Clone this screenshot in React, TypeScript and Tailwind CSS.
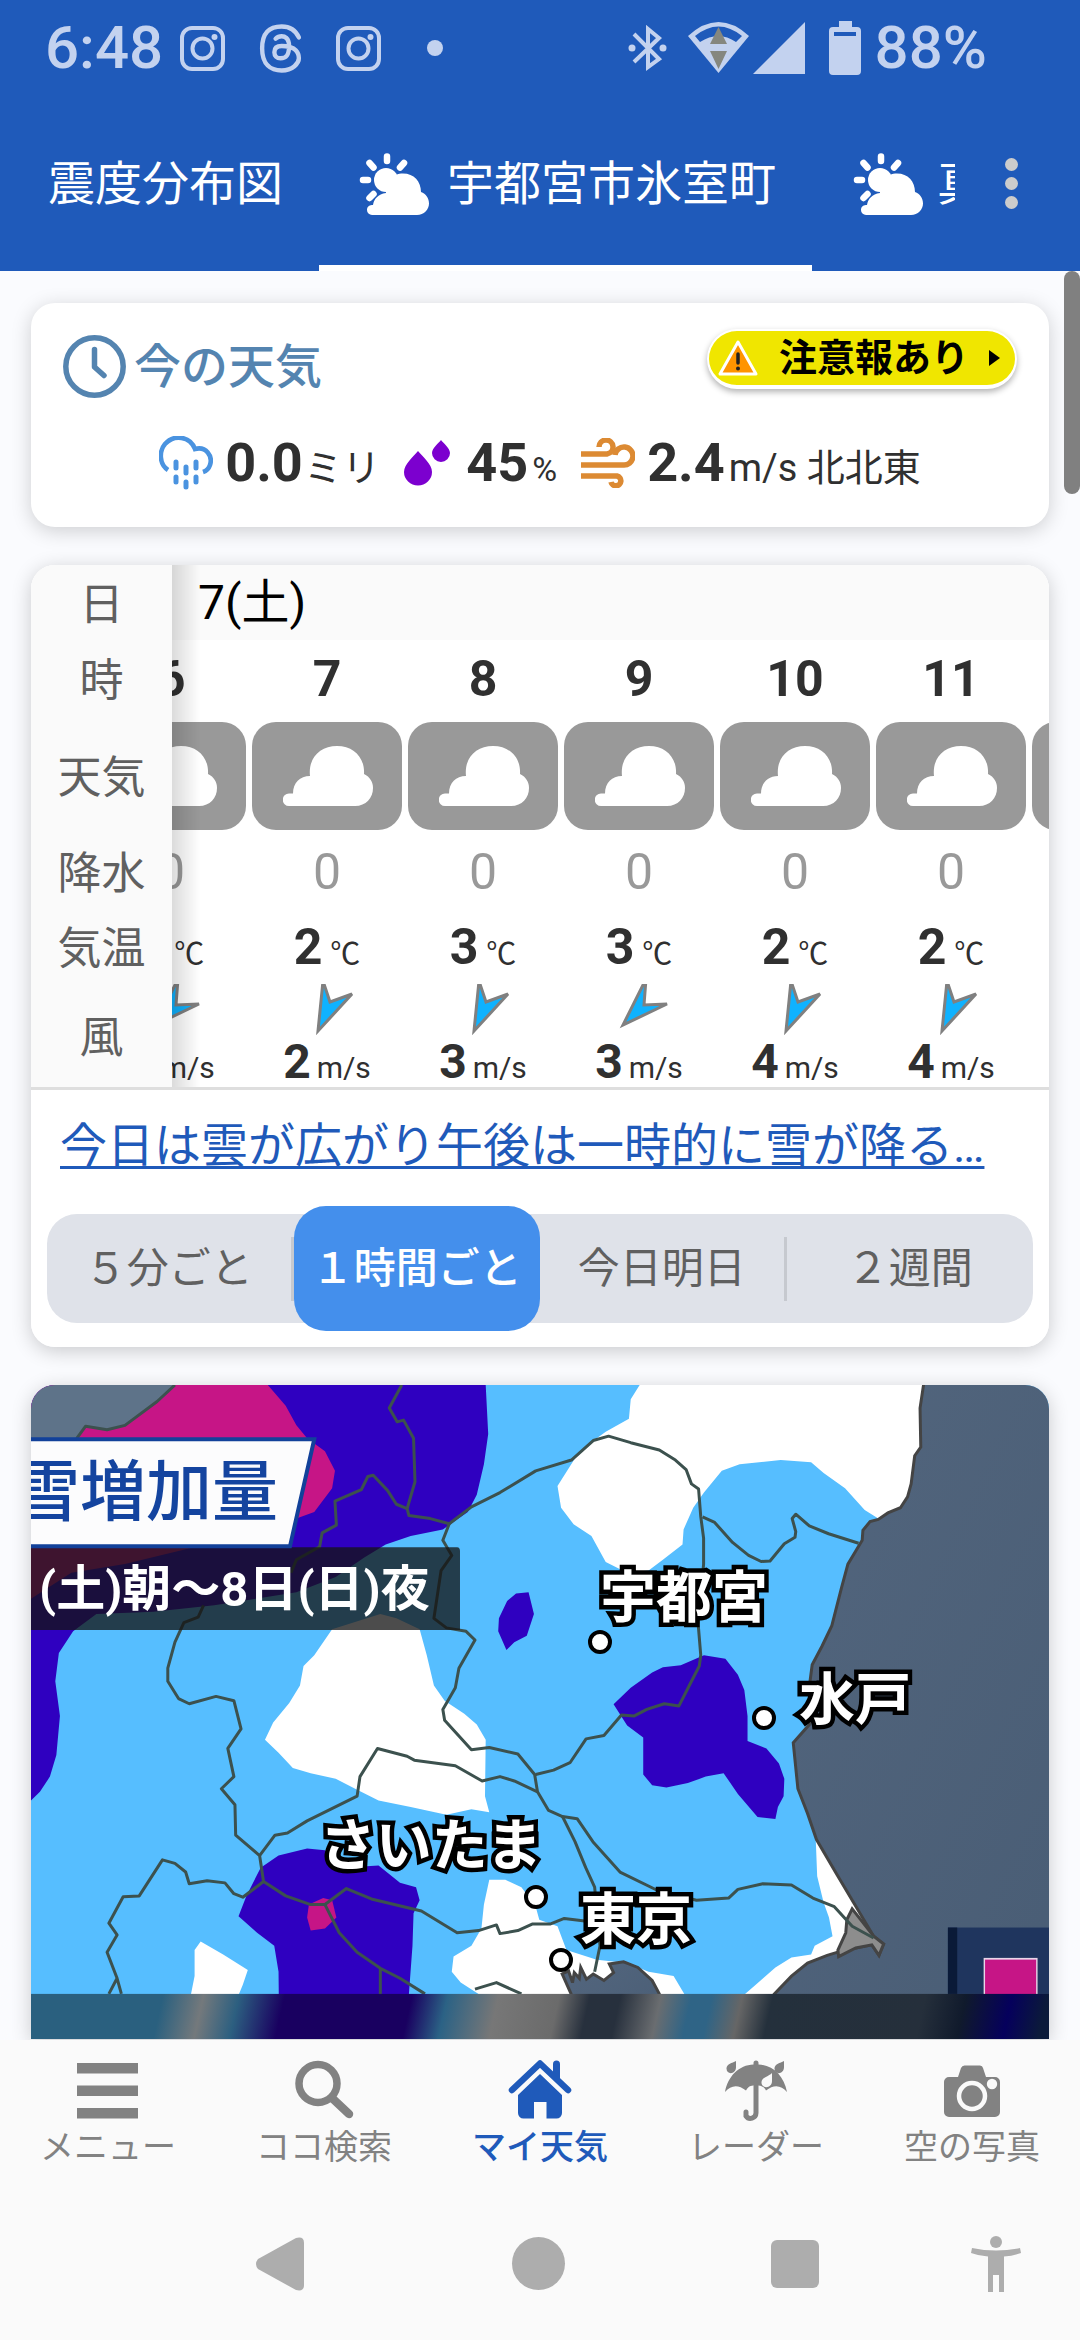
import { useState } from "react";
import clsx from "clsx";

type WindDir = "nne" | "ne";

type Hour = {
  hour: number;
  rain: number;
  temp: number;
  wind: number;
  dir: WindDir;
};

const hours: readonly Hour[] = [
  { hour: 6, rain: 0, temp: 2, wind: 2, dir: "ne" },
  { hour: 7, rain: 0, temp: 2, wind: 2, dir: "nne" },
  { hour: 8, rain: 0, temp: 3, wind: 3, dir: "nne" },
  { hour: 9, rain: 0, temp: 3, wind: 3, dir: "ne" },
  { hour: 10, rain: 0, temp: 2, wind: 4, dir: "nne" },
  { hour: 11, rain: 0, temp: 2, wind: 4, dir: "nne" },
  { hour: 12, rain: 0, temp: 2, wind: 4, dir: "nne" },
];

const ranges = ["５分ごと", "１時間ごと", "今日明日", "２週間"] as const;

const arrowPaths: Record<WindDir, string> = {
  nne: "M-4 -3 L3 18 L25 10 L-9 47Z",
  ne: "M7 -5 L5 21 L28 20 L-16 41Z",
};

/* ---------- status bar icons ---------- */

function InstagramIcon() {
  return (
    <svg viewBox="0 0 45 45" className="size-[45px]" fill="none" stroke="currentColor" strokeWidth="4">
      <rect x="2" y="2" width="41" height="41" rx="10" />
      <circle cx="22.5" cy="22.5" r="10" />
      <circle cx="34.5" cy="11" r="3" fill="currentColor" stroke="none" />
    </svg>
  );
}

function ThreadsIcon() {
  return (
    <svg viewBox="3 2 17 20" className="h-[49px] w-[43px]" fill="none" stroke="currentColor" strokeWidth="1.8" strokeLinecap="round">
      <path d="M19 7.5c-1.333 -3 -3.667 -4.5 -7 -4.5c-5 0 -8 2.5 -8 9s3.5 9 8 9s7 -3 7 -5s-1 -5 -7 -5c-2.5 0 -3 1.25 -3 2.5c0 1.5 1 2.5 2.5 2.5c2.5 0 3.5 -1.5 3.5 -5s-2 -4 -3 -4s-1.833 .333 -2.5 1" />
    </svg>
  );
}

function BluetoothIcon() {
  return (
    <svg viewBox="0 0 40 46" className="h-[46px] w-10" fill="none" stroke="currentColor" strokeWidth="4">
      <path d="M6 9 L31 34 L20 42 V4 L31 13 L6 37" />
      <circle cx="4" cy="23" r="3.5" fill="currentColor" stroke="none" />
      <circle cx="35" cy="23" r="3.5" fill="currentColor" stroke="none" />
    </svg>
  );
}

function WifiIcon() {
  return (
    <svg viewBox="0 0 61 52" className="h-[52px] w-[61px]">
      <path d="M0 14 Q30.500 -14 61 14 L30.500 51Z" fill="currentColor" />
      <path d="M7 14 Q30.500 -5 54 14 L48 20 Q30.500 8 12 20Z" fill="#1f5aba" />
      <path d="M22 22 L30.500 5 L39 22Z M22 29 H39 L30.500 47Z" fill="#85877f" />
    </svg>
  );
}

function BatteryIcon() {
  return (
    <svg viewBox="0 0 32 54" className="h-[54px] w-8">
      <path d="M10 0 H23 V6 H28 a4 4 0 0 1 4 4 V50 a4 4 0 0 1 -4 4 H4 a4 4 0 0 1 -4 -4 V10 a4 4 0 0 1 4 -4 H10Z" fill="currentColor" />
      <rect x="5" y="11" width="22" height="4" fill="#1f5aba" />
    </svg>
  );
}

/* ---------- weather icons ---------- */

function SunCloudIcon() {
  return (
    <svg viewBox="0 0 72 64" className="h-16 w-[72px] shrink-0" fill="white">
      <g stroke="white" strokeWidth="6.500" strokeLinecap="round">
        <path d="M28 4.500 V9 M10.500 11 L14.500 15.500 M45 11 L41 15.500 M4 28 H9 M10.500 46 L14.500 42" />
      </g>
      <circle cx="27" cy="28" r="12" />
      <path d="M13 63 a5 5 0 0 1 -5 -5 c0 -4 3 -5 6 -5 c1 -6 5 -11 13 -12 c-1 -12 7 -19.500 17 -19.500 c11 0 18 8 18 18.500 c5 2 8 6 8 11.500 c0 6 -5 11.500 -12 11.500Z" />
    </svg>
  );
}

function CloudIcon() {
  return (
    <svg viewBox="0 0 90 60" className="ml-0.5 h-[60px] w-[90px]" fill="white">
      <path d="M6 60 a6 6 0 0 1 0 -12.500 H10 C10 37 17 30 27 30 C25 12 37 0 54 0 C71 0 82 12 81 28 C87 31 90 36 90 42 C90 52 83 60 72 60Z" />
    </svg>
  );
}

function ClockIcon() {
  return (
    <svg viewBox="0 0 63 63" className="size-[63px]" fill="none" stroke="#5484b0" strokeWidth="5.500" strokeLinecap="round" strokeLinejoin="round">
      <circle cx="31.500" cy="31.500" r="28.700" />
      <path d="M31.500 14.500 V32 L41 40.500" />
    </svg>
  );
}

function RainIcon() {
  return (
    <svg viewBox="0 0 54 54" className="size-[54px]" fill="none" stroke="#4a93e0" strokeWidth="4.600">
      <path d="M9 34 C0 28 0 15 6 8 C15 -2 31 0 36 13 C47 10 54 20 51 29 C50 32 47 35 44 36" />
      <path d="M17 26 V32 M27 31 V37 M37 26 V32 M17 41 V46 M27 46 V51 M37 41 V46" strokeLinecap="round" strokeWidth="5" />
    </svg>
  );
}

function DropsIcon() {
  return (
    <svg viewBox="0 0 46 46" className="size-[46px]" fill="#7c00cf">
      <path d="M14 11 C18 16 28 24 28 32 a14 13.500 0 0 1 -28 0 C0 24 10 16 14 11Z" />
      <path d="M37 0 C39 3 46 8 46 13 a9 9 0 0 1 -18 0 C28 8 35 3 37 0Z" />
    </svg>
  );
}

function WindIcon() {
  return (
    <svg viewBox="0 0 54 50" className="h-[50px] w-[54px]" fill="none" stroke="#dc8a33" strokeWidth="5.500">
      <path d="M0 16 H26 A7 7 0 1 0 18 9" />
      <path d="M0 27 H42 A9 9 0 1 0 34 17" />
      <path d="M0 38 H36 A5 5 0 1 1 30 44" />
    </svg>
  );
}

function WarningIcon() {
  return (
    <svg viewBox="0 0 42 38" className="h-[38px] w-[42px]">
      <path d="M21 3 L39 35 H3Z" fill="#ff9400" stroke="white" strokeWidth="3" strokeLinejoin="round" />
      <path d="M21 15 V24" stroke="#222" strokeWidth="3.500" strokeLinecap="round" />
      <circle cx="21" cy="29.500" r="2" fill="#222" />
    </svg>
  );
}

function WindArrow({ dir }: { dir: WindDir }) {
  return (
    <svg viewBox="-32 0 64 52" className="mx-auto h-[52px] w-16">
      <path d={arrowPaths[dir]} fill="#0fb2ff" stroke="#808080" strokeWidth="3" />
    </svg>
  );
}

/* ---------- bottom navigation icons ---------- */

function MenuIcon() {
  return (
    <svg viewBox="0 0 64 64" className="size-16" fill="currentColor">
      <path d="M1 5 H62 V15.500 H1Z M1 27.500 H62 V38 H1Z M1 50 H62 V60.500 H1Z" />
    </svg>
  );
}

function SearchIcon() {
  return (
    <svg viewBox="0 0 64 64" className="size-16" fill="none" stroke="currentColor">
      <circle cx="26" cy="25.500" r="19" strokeWidth="7.500" />
      <path d="M40 40 L57 56" strokeWidth="8.500" strokeLinecap="round" />
    </svg>
  );
}

function HomeIcon() {
  return (
    <svg viewBox="0 0 64 64" className="size-16" fill="currentColor">
      <path d="M4 32 L32 5.500 L60 32" fill="none" stroke="currentColor" strokeWidth="6.500" strokeLinecap="round" strokeLinejoin="round" />
      <path d="M45 6 a3 3 0 0 1 7 0 V22 L45 15Z" />
      <path d="M32 16 L54 37 V55 a5.500 5.500 0 0 1 -5.500 5.500 H38.500 V44 H26 V60.500 H15.500 A5.500 5.500 0 0 1 10 55 V37Z" />
    </svg>
  );
}

function UmbrellaIcon() {
  return (
    <svg viewBox="0 0 64 64" className="size-16" fill="currentColor">
      <path d="M1 34 C4 18 15 7 29.500 6.500 V5 a2.500 2.500 0 0 1 5 0 V6.500 C49 7 60 18 63 34 C57 27 50 26 42 32.500 C39 27 36 28 32 27 C28 28 25 27 22 32.500 C14 26 7 27 1 34Z" />
      <path d="M32 26 V55 a5.500 5.500 0 0 1 -10 3 V54" fill="none" stroke="currentColor" strokeWidth="5" strokeLinecap="round" />
      <path d="M12 3 V9 C12 17 2 17 2.500 10 C3 6 8 5 12 3Z M60 3 V9 C60 17 50 17 50.500 10 C51 6 56 5 60 3Z" />
      <path d="M48 15 V23 C48 31 37 31 37.500 24 C38 19 44 19 48 15Z" fill="#fafafa" />
    </svg>
  );
}

function CameraIcon() {
  return (
    <svg viewBox="0 0 64 64" className="size-16" fill="currentColor">
      <path d="M18 19 L21 10 Q22 7.500 24.500 7.500 H40 Q42.500 7.500 43 10 L46 19 H55 a5 5 0 0 1 5 5 V54 a5 5 0 0 1 -5 5 H9 a5 5 0 0 1 -5 -5 V24 a5 5 0 0 1 5 -5Z" />
      <circle cx="32" cy="38" r="13" fill="none" stroke="#fafafa" strokeWidth="4.500" />
      <circle cx="52" cy="26" r="5.200" fill="#fafafa" />
    </svg>
  );
}

const navItems = [
  { label: "メニュー", icon: MenuIcon },
  { label: "ココ検索", icon: SearchIcon },
  { label: "マイ天気", icon: HomeIcon, active: true },
  { label: "レーダー", icon: UmbrellaIcon },
  { label: "空の写真", icon: CameraIcon },
];

/* ---------- sections ---------- */

function StatusBar() {
  return (
    <div className="flex h-24 items-center justify-between pr-[93px] pl-[45px] text-[#c3d2ef]">
      <div className="flex items-center gap-[34px]">
        <div className="flex items-center gap-[17px]">
          <span className="text-[60px] leading-none font-medium">6:48</span>
          <InstagramIcon />
        </div>
        <ThreadsIcon />
        <InstagramIcon />
        <span className="ml-3 size-4 rounded-full bg-current" />
      </div>
      <div className="flex items-center gap-5">
        <BluetoothIcon />
        <div className="flex items-center gap-1">
          <WifiIcon />
          <svg viewBox="0 0 52 52" className="size-[52px]" fill="currentColor">
            <path d="M0 52 L52 0 V52Z" />
          </svg>
        </div>
        <div className="flex items-center gap-3.5 pl-1">
          <BatteryIcon />
          <span className="text-[60px] leading-none font-medium">88%</span>
        </div>
      </div>
    </div>
  );
}

function PlaceTabs() {
  return (
    <div className="flex h-[175px] items-stretch pl-12 text-[47px] leading-none text-white">
      <div role="tablist" className="flex min-w-0 flex-1 overflow-hidden">
        <button type="button" role="tab" className="shrink-0 pr-9">
          震度分布図
        </button>
        <button
          type="button"
          role="tab"
          aria-selected="true"
          className="flex shrink-0 items-center gap-4 border-y-6 border-t-transparent border-b-white pr-9 pl-10"
        >
          <SunCloudIcon />
          宇都宮市氷室町
        </button>
        <button type="button" role="tab" className="flex shrink-0 items-center gap-3 pr-9 pl-[41px]">
          <SunCloudIcon />
          真岡市
        </button>
      </div>
      <button type="button" aria-label="その他" className="flex w-[125px] shrink-0 flex-col items-center justify-center gap-1.5 pr-3">
        <span className="size-[13px] rounded-full bg-[#cccccc]" />
        <span className="size-[13px] rounded-full bg-[#cccccc]" />
        <span className="size-[13px] rounded-full bg-[#cccccc]" />
      </button>
    </div>
  );
}

function NowCard() {
  return (
    <section className="rounded-3xl bg-white px-8 pt-[26px] pb-8 shadow-[0_4px_20px_rgba(0,0,0,0.18)]">
      <div className="flex h-[74px] items-start justify-between">
        <h2 className="flex h-full items-center gap-2 text-[47px] leading-none font-medium text-[#5484b0]">
          <ClockIcon />
          今の天気
        </h2>
        <button
          type="button"
          className="flex h-[60px] w-[310px] items-center rounded-full border-2 border-b-4 border-white bg-[#f0e600] pl-2 text-[38px] leading-none font-bold text-black shadow-[0_3px_6px_rgba(0,0,0,0.3)]"
        >
          <WarningIcon />
          <span className="ml-5">注意報あり</span>
          <svg viewBox="0 0 11 16" className="ml-5 h-4 w-[11px]">
            <path d="M0 0 L11 8 L0 16Z" />
          </svg>
        </button>
      </div>
      <div className="mt-7 flex h-16 items-center justify-center gap-6 text-[38px] leading-none text-[#303030]">
        <div className="flex items-center gap-3">
          <RainIcon />
          <p>
            <span className="text-[54px] font-bold">0.0</span> <span className="-ml-2">ミリ</span>
          </p>
        </div>
        <div className="flex items-center gap-4">
          <DropsIcon />
          <p>
            <span className="mr-1 text-[54px] font-bold">45</span>
            <span className="text-[34px]">%</span>
          </p>
        </div>
        <div className="flex items-center gap-3">
          <WindIcon />
          <p>
            <span className="mr-1 text-[54px] font-bold">2.4</span>m/s 北北東
          </p>
        </div>
      </div>
    </section>
  );
}

function RowHead({ children }: { children: string }) {
  return (
    <th
      scope="row"
      className="sticky left-0 z-10 w-[141px] bg-[#fafafa] pt-1 text-[44px] leading-none font-normal text-[#606060] after:absolute after:inset-y-0 after:left-full after:w-7 after:bg-linear-to-r after:from-black/14 after:to-transparent"
    >
      {children}
    </th>
  );
}

function ForecastCard() {
  const [range, setRange] = useState<string>(ranges[1]);

  return (
    <section className="overflow-hidden rounded-3xl bg-white">
      <div className="overflow-hidden border-b-3 border-[#dedede]">
        {/* scrolled sideways so that the first hour sits half under the row heads */}
        <table className="-ml-[79px] w-[1233px] table-fixed border-collapse text-center text-[50px] leading-none text-[#303030]">
          <tbody>
            <tr className="h-[75px] bg-[#fafafa]">
              <RowHead>日</RowHead>
              <td colSpan={7} className="pl-[105px] text-left text-[48px] text-black">
                7(土)
              </td>
            </tr>
            <tr className="h-[78px]">
              <RowHead>時</RowHead>
              {hours.map((h) => (
                <td key={h.hour} className="font-bold">
                  {h.hour}
                </td>
              ))}
            </tr>
            <tr className="h-[115px]">
              <RowHead>天気</RowHead>
              {hours.map((h) => (
                <td key={h.hour} className="px-[3px]">
                  <div className="flex h-[108px] items-center justify-center rounded-3xl bg-[#999999]">
                    <CloudIcon />
                  </div>
                </td>
              ))}
            </tr>
            <tr className="h-[77px]">
              <RowHead>降水</RowHead>
              {hours.map((h) => (
                <td key={h.hour} className="text-[#999999]">
                  {h.rain}
                </td>
              ))}
            </tr>
            <tr className="h-[74px]">
              <RowHead>気温</RowHead>
              {hours.map((h) => (
                <td key={h.hour}>
                  <span className="font-bold">{h.temp}</span>
                  <span className="ml-2 text-[30px]">℃</span>
                </td>
              ))}
            </tr>
            <tr className="h-[103px]">
              <RowHead>風</RowHead>
              {hours.map((h) => (
                <td key={h.hour}>
                  <WindArrow dir={h.dir} />
                  <p className="h-[51px]">
                    <span className="text-[48px] font-bold">{h.wind}</span>
                    <span className="ml-1.5 text-[30px]">m/s</span>
                  </p>
                </td>
              ))}
            </tr>
          </tbody>
        </table>
      </div>

      <a href="#forecast" className="block truncate px-[29px] pt-[26px] text-[47px] leading-[60px] text-[#1f5aba] underline decoration-3 underline-offset-4">
        今日は雲が広がり午後は一時的に雪が降る…
      </a>

      <div className="mx-4 mt-[38px] mb-6 grid h-[109px] grid-cols-4 content-center items-center rounded-[30px] bg-[#dfe2e9]">
        {ranges.map((label, i) => (
          <button
            key={label}
            type="button"
            onClick={() => setRange(label)}
            className={clsx(
              "text-[42px] leading-none whitespace-nowrap",
              label === range
                ? "h-[125px] rounded-[32px] bg-[#448fec] font-medium text-white"
                : "h-16 text-[#606060]",
              label !== range && i < ranges.length - 1 && "border-r-3 border-[#c6c9cf]",
            )}
          >
            {label}
          </button>
        ))}
      </div>
    </section>
  );
}

function CityLabel({ name, className }: { name: string; className: string }) {
  return (
    <span
      className={clsx(
        "absolute -translate-x-1/2 -translate-y-1/2 text-[56px] leading-none font-bold whitespace-nowrap text-white [-webkit-text-stroke:9px_black] [paint-order:stroke_fill]",
        className,
      )}
    >
      {name}
    </span>
  );
}

function CityDot({ className }: { className: string }) {
  return (
    <span className={clsx("absolute size-6 -translate-x-1/2 -translate-y-1/2 rounded-full border-4 border-black bg-white", className)} />
  );
}

function SnowMap() {
  return (
    <svg viewBox="87 37 2850 1508" preserveAspectRatio="none" className="h-[654px] w-full">
      <defs>
        <linearGradient id="sea" x1="0" y1="0" x2="1" y2="1">
          <stop offset="0" stopColor="#53667e" />
          <stop offset="1" stopColor="#495d75" />
        </linearGradient>
        <linearGradient id="bar" gradientUnits="userSpaceOnUse" x1="87" y1="1441" x2="2741" y2="2158">
          <stop offset="0" stopColor="#2a607f" />
          <stop offset="0.13" stopColor="#2a607f" />
          <stop offset="0.17" stopColor="#74797c" />
          <stop offset="0.205" stopColor="#2c5f80" />
          <stop offset="0.25" stopColor="#190060" />
          <stop offset="0.375" stopColor="#190060" />
          <stop offset="0.41" stopColor="#2b6285" />
          <stop offset="0.46" stopColor="#777777" />
          <stop offset="0.52" stopColor="#6b6b6b" />
          <stop offset="0.55" stopColor="#27303d" />
          <stop offset="0.58" stopColor="#27303d" />
          <stop offset="0.62" stopColor="#6a6d70" />
          <stop offset="0.65" stopColor="#2f6486" />
          <stop offset="0.67" stopColor="#2f6486" />
          <stop offset="0.7" stopColor="#666666" />
          <stop offset="0.73" stopColor="#24303c" />
          <stop offset="0.88" stopColor="#252f3b" />
          <stop offset="0.92" stopColor="#101a2c" />
          <stop offset="0.965" stopColor="#05005c" />
          <stop offset="1" stopColor="#0b1a3a" />
        </linearGradient>
      </defs>

      <rect x="87" y="37" width="2850" height="1508" fill="#56beff" />

      {/* no snow */}
      <g fill="white">
        <path d="M1791 37 L1766 70 1761 115 1696 145 1671 160 1611 205 1561 270 1571 320 1606 358 1656 385 1696 445 1756 470 1816 465 1856 440 1911 405 1914 370 1941 320 1971 285 2021 235 2071 220 2186 210 2271 215 2306 240 2366 275 2421 325 2459 345 2600 347 2600 37Z" />
        <path d="M2284 1085 L2288 1170 2306 1230 2321 1265 2331 1308 2281 1330 2271 1350 2216 1357 2171 1380 2116 1420 2086 1441 2086 1545 2200 1545 2500 1340Z" />
        <path d="M1370 1178 L1415 1178 1460 1195 1500 1240 1510 1270 1561 1285 1586 1340 1671 1362 1756 1370 1816 1390 1886 1400 1916 1441 V1545 H1340 V1441 L1290 1415 1265 1390 1270 1355 1320 1330 1348 1290 1355 1235Z" />
        <path d="M1065 565 L1110 575 1175 600 1195 660 1215 730 1245 765 1300 795 1335 820 1360 855 1358 985 1370 1022 1320 1015 1250 1028 1150 1010 1060 995 1000 970 940 945 870 932 820 920 780 885 742 855 765 815 810 770 840 730 850 685 880 660 930 600Z" />
        <path d="M562 1320 L625 1350 694 1386 680 1420 665 1450 V1545 H530 L535 1441 545 1400 545 1340Z" />
      </g>

      {/* heavy snow */}
      <g fill="#2f00c0">
        <path d="M87 37 H1360 L1367 150 1355 220 1335 290 1310 330 1240 370 1150 385 1080 405 1020 435 940 480 830 515 600 545 430 560 270 565 205 605 165 655 155 720 168 800 158 890 140 940 112 975 87 995Z" />
        <path d="M1445 518 L1480 515 1495 565 1475 615 1440 630 1418 648 1395 605 1397 575 1420 535Z" />
        <path d="M1718 773 L1766 735 1826 700 1856 688 1906 683 1971 660 2031 668 2066 705 2084 740 2093 800 2093 858 2146 875 2181 910 2196 945 2194 985 2178 1010 2171 1038 2121 1033 2066 980 2026 932 1976 940 1926 955 1866 965 1826 960 1801 935 1801 850 1756 822Z" />
        <path d="M668 1262 L690 1215 730 1150 780 1122 860 1106 910 1110 960 1150 1060 1145 1120 1185 1165 1195 1175 1225 1158 1255 1155 1330 1145 1441 V1545 H782 L780 1390 768 1330 720 1300Z" />
      </g>
      <g fill="#c61586">
        <path d="M480 37 H750 L800 85 830 130 860 160 910 190 938 235 930 275 880 330 830 345 700 380 500 420 350 450 200 470 87 530 V37Z" />
        <path d="M865 1235 L905 1220 930 1225 942 1265 910 1290 870 1295 860 1265Z" />
      </g>
      <path d="M87 37 H490 L440 75 350 130 300 140 240 132 215 160 H87Z" fill="#5e7389" />

      {/* sea */}
      <g stroke="#444444" strokeWidth="3" fill="url(#sea)">
        <path
          vectorEffect="non-scaling-stroke"
          d="M2587 30 L2576 90 2578 180 2561 200 2551 265 2541 295 2521 320 2486 332 2459 347 2436 352 2416 372 2414 395 2396 420 2374 450 2356 505 2329 592 2301 640 2274 682 2268 720 2266 820 2221 862 2234 968 2261 1025 2286 1085 2344 1167 2446 1308 2474 1326 2461 1352 2441 1328 2396 1335 2348 1344 2316 1352 2261 1370 2216 1400 2168 1441 2050 1550 2950 1550 2950 30Z"
        />
        <path
          vectorEffect="non-scaling-stroke"
          d="M1574 1395 L1599 1441 1599 1545 1850 1545 1846 1441 1826 1410 1786 1380 1746 1367 1706 1372 1718 1392 1691 1410 1661 1395 1642 1407 1626 1380 1622 1405 1608 1392 1603 1415 1592 1388Z"
        />
        <path
          vectorEffect="non-scaling-stroke"
          fill="#8d8d8d"
          d="M2386 1245 L2446 1308 2474 1326 2461 1352 2441 1328 2396 1335 2348 1355 2346 1340 2368 1300 2371 1270Z"
        />
      </g>

      {/* prefecture borders */}
      <g fill="none" stroke="#3c514e" strokeWidth="3" strokeLinejoin="round">
        <path vectorEffect="non-scaling-stroke" d="M490 37 L440 75 350 130 300 140 240 132 215 160" />
        <path vectorEffect="non-scaling-stroke" d="M1125 37 L1090 90 1112 122 1130 118 1158 160 1162 260 1140 322 1110 312 1085 280 1045 245 1030 248 1012 278 938 305 942 360 902 378 895 410 830 440 815 470" />
        <path vectorEffect="non-scaling-stroke" d="M1140 322 L1145 338 1205 345 1258 357 1320 318 1400 285 1500 235 1600 210 1661 165 1704 155 1766 170 1846 187 1891 210 1921 232 1936 265 1956 277 1962 340 1970 390 1970 450 1955 590 1962 660 1958 685 1930 730 1901 777 1860 772 1811 785 1776 800 1740 798 1691 845 1641 853 1596 908 1550 925 1500 935" />
        <path vectorEffect="non-scaling-stroke" d="M1967 341 L2001 354 2051 400 2096 430 2131 444 2156 443 2196 403 2226 388 2228 375 2218 345 2228 335 2266 362 2320 380 2404 402" />
        <path vectorEffect="non-scaling-stroke" d="M1258 357 L1240 395 1265 430 1235 465 1225 520 1215 575 1250 597 1305 605 1330 625 1285 690 1275 735 1240 785 1245 810 1320 878 1370 873 1450 888 1497 935 1505 975 1536 1018 1575 1032 1616 1037 1660 1090 1736 1160 1840 1202 1950 1225 2040 1220 2066 1200 2136 1187 2216 1190 2276 1220 2336 1240 2386 1285 2446 1312" />
        <path vectorEffect="non-scaling-stroke" d="M1575 1032 L1610 1090 1640 1150 1665 1195 1680 1330 1665 1390" />
        <path vectorEffect="non-scaling-stroke" d="M727 1122 L770 1075 805 1070 860 1042 1000 985 1008 940 1057 875 1140 893 1160 902 1275 915 1350 950 1400 940 1440 950 1505 975" />
        <path vectorEffect="non-scaling-stroke" d="M570 545 L555 572 515 585 490 630 470 690 470 720 500 760 530 772 605 755 655 765 675 830 638 875 655 940 620 968 658 1005 660 1075 727 1122 738 1182 800 1215 870 1235 910 1235 970 1198 1040 1222 1180 1250 1280 1300 1340 1295 1390 1282 1400 1302 1450 1295 1490 1280 1540 1280 1580 1267 1660 1275" />
        <path vectorEffect="non-scaling-stroke" d="M738 1182 L680 1218 655 1210 630 1185 580 1180 530 1187 520 1160 490 1140 455 1132 390 1215 345 1217 305 1278 328 1305 300 1345 328 1405 305 1441 M328 1405 L340 1441" />
        <path vectorEffect="non-scaling-stroke" d="M910 1235 L950 1300 1000 1345 1065 1382 1120 1405 1190 1441 M1065 1382 V1441 M1330 1430 L1390 1415 1460 1441" />
      </g>

      {/* legend corner */}
      <rect x="2654" y="1288" width="283" height="153" fill="#1f355e" />
      <rect x="2654" y="1288" width="26" height="153" fill="#0a1a38" />
      <rect x="2756" y="1360" width="147" height="100" fill="#c61586" stroke="#e8d5e8" strokeWidth="4" />

      <rect x="87" y="1441" width="2850" height="104" fill="url(#bar)" />

      {/* caption plates */}
      <path d="M87 411 H1280 Q1288 411 1288 420 V602 H87Z" fill="#141414" fillOpacity="0.76" />
      <path d="M75 162 H880 L812 409 H75Z" fill="#fcfcfd" stroke="#12419a" strokeWidth="4" vectorEffect="non-scaling-stroke" />
    </svg>
  );
}

function MapCard() {
  return (
    <section className="relative overflow-hidden rounded-t-3xl">
      <SnowMap />
      <p className="absolute top-[75px] -left-[17px] text-[66px] leading-none font-medium text-[#14449f]">雪増加量</p>
      <p className="absolute top-[180px] left-2 text-[49px] leading-none font-bold text-white">(土)朝〜8日(日)夜</p>
      <CityDot className="top-[257px] left-[569px]" />
      <CityDot className="top-[333px] left-[733px]" />
      <CityDot className="top-[512px] left-[505px]" />
      <CityDot className="top-[575px] left-[530px]" />
      <CityLabel name="宇都宮" className="top-[213px] left-[653px]" />
      <CityLabel name="水戸" className="top-[315px] left-[824px]" />
      <CityLabel name="さいたま" className="top-[461px] left-[400px]" />
      <CityLabel name="東京" className="top-[535px] left-[605px]" />
    </section>
  );
}

function BottomNav() {
  return (
    <nav className="grid h-[147px] grid-cols-5 pt-[18px]">
      {navItems.map(({ label, icon: Icon, active }) => (
        <a
          key={label}
          href="#nav"
          className={clsx(
            "flex flex-col items-center text-[34px] leading-none whitespace-nowrap",
            active ? "font-medium text-[#1f5aba]" : "text-[#828282]",
          )}
        >
          <Icon />
          <span className="mt-2">{label}</span>
        </a>
      ))}
    </nav>
  );
}

function SystemBar() {
  return (
    <div className="grid h-[153px] grid-cols-[258fr_258fr_255fr_148fr] items-center justify-items-center pr-2.5 pl-[151px] text-[#adadad]">
      <button type="button" aria-label="戻る">
        <svg viewBox="0 0 48 54" className="h-[54px] w-12" fill="currentColor">
          <path d="M2 22 L40 1 Q48 -1 48 6 V48 Q48 55 40 53 L2 32 Q-2 27 2 22Z" />
        </svg>
      </button>
      <button type="button" aria-label="ホーム" className="size-[53px] rounded-full bg-current" />
      <button type="button" aria-label="最近" className="size-12 rounded-md bg-current" />
      <button type="button" aria-label="ユーザー補助">
        <svg viewBox="0 0 50 56" className="h-14 w-[50px]" fill="currentColor">
          <circle cx="25" cy="6" r="6" />
          <path d="M1 12 Q25 17 49 12 L50 17 Q42 20 33 20.500 V56 H28 V39 H22 V56 H17 V20.500 Q8 20 0 17Z" />
        </svg>
      </button>
    </div>
  );
}

export default function App() {
  return (
    <div className="flex h-screen flex-col overflow-hidden bg-[#fafbfe] [font-family:Roboto,'Noto_Sans_CJK_JP',sans-serif]">
      <header className="shrink-0 bg-[#1f5aba]">
        <StatusBar />
        <PlaceTabs />
      </header>

      <main className="relative min-h-0 flex-1 overflow-hidden px-[31px] pt-8">
        <div className="flex flex-col gap-[38px]">
          <NowCard />
          <div className="rounded-3xl shadow-[0_4px_20px_rgba(0,0,0,0.2)]">
            <ForecastCard />
          </div>
          <div className="rounded-t-3xl shadow-[0_4px_20px_rgba(0,0,0,0.2)]">
            <MapCard />
          </div>
        </div>
        {/* scroll thumb */}
        <div className="absolute top-0 right-0 h-[223px] w-4 rounded-full bg-[#808080]" />
      </main>

      <footer className="shrink-0 bg-[#fafafa]">
        <BottomNav />
        <SystemBar />
      </footer>
    </div>
  );
}
